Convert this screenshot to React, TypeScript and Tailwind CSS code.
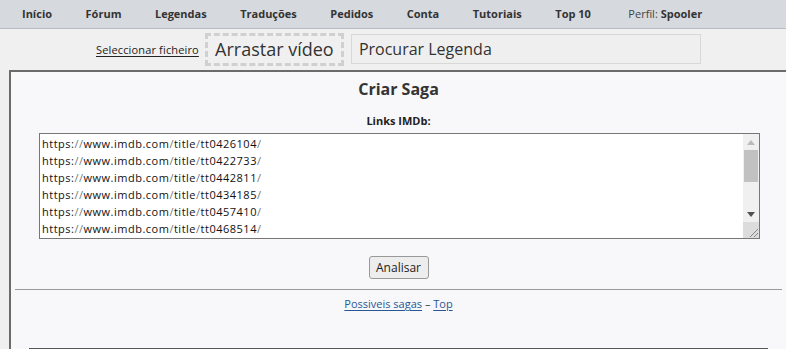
import type { ReactNode } from "react"

const navItems = ["Início", "Fórum", "Legendas", "Traduções", "Pedidos", "Conta", "Tutoriais", "Top 10"]

const links = ["tt0426104", "tt0422733", "tt0442811", "tt0434185", "tt0457410", "tt0468514"]

function Url({ id }: { id: string }) {
  return (
    <div className="h-[17px] leading-[17px] whitespace-nowrap tracking-[0.5px]">
      https:<span className="text-[#777]">/</span>
      <span className="text-[#777]">/</span>www.imdb.com<span className="text-[#777]">/</span>title
      <span className="text-[#777]">/</span>
      {id}
      <span className="text-[#777]">/</span>
    </div>
  )
}

function Scrollbar() {
  return (
    <div className="flex w-[16px] flex-col bg-[#f0f0f0]">
      <div className="flex h-[16px] items-center justify-center">
        <svg width="8" height="5" viewBox="0 0 8 5">
          <path d="M0 5 L4 0 L8 5 Z" fill="#bbb" />
        </svg>
      </div>
      <div className="mx-[1px] h-[32px] bg-[#c1c1c1]" />
      <div className="flex-1" />
      <div className="flex h-[16px] items-center justify-center">
        <svg width="8" height="5" viewBox="0 0 8 5">
          <path d="M0 0 L8 0 L4 5 Z" fill="#505050" />
        </svg>
      </div>
      <div className="relative h-[16px] bg-[#dcdcdc]">
        <svg className="absolute right-0 bottom-0" width="12" height="12" viewBox="0 0 12 12">
          <path d="M11 3 L3 11 M11 7 L7 11" stroke="#888" strokeWidth="1" />
        </svg>
      </div>
    </div>
  )
}

function Link({ children }: { children: ReactNode }) {
  return <a className="text-[#2a5794] underline underline-offset-2">{children}</a>
}

export default function App() {
  return (
    <div
      className="h-[349px] w-full overflow-hidden bg-[#f0f0f0] text-[#222]"
      style={{ fontFamily: '"Open Sans", "DejaVu Sans", sans-serif' }}
    >
      <nav className="flex h-[29px] items-center gap-[33.5px] border-b border-[#b9bcc2] bg-[#d6d9de] pl-[22px] text-[11px] font-bold text-[#333]">
        {navItems.map((n) => (
          <span key={n}>{n}</span>
        ))}
        <span className="ml-[4px] font-normal text-[#444]">
          Perfil: <span className="font-bold text-[#333]">Spooler</span>
        </span>
      </nav>

      <div className="flex h-[41px] items-start pl-[96px] pt-[4px]">
        <a className="mt-[9px] text-[11px] tracking-[0.15px] text-[#222] underline underline-offset-2">
          Seleccionar ficheiro
        </a>
        <div className="ml-[6px] flex h-[33px] w-[139px] items-center justify-center border-[3px] border-dashed border-[#d0d0d0] text-[18px] text-[#333]">
          Arrastar vídeo
        </div>
        <div className="ml-[7px] mt-[1px] flex h-[30px] w-[350px] items-center border border-[#d8d8d8] bg-[#efefef] pl-[7px] text-[16px] text-[#333]">
          Procurar Legenda
        </div>
      </div>

      <main className="ml-[9px] h-[280px] border-t-2 border-l-2 border-[#6b6b6b] bg-[#f8f8fa]">
        <h1 className="pt-[6px] text-center text-[16px] leading-[22px] font-bold text-[#333]">Criar Saga</h1>
        <div className="mt-[13px] text-center text-[11px] leading-[15px] font-bold text-[#222]">Links IMDb:</div>
        <div className="mt-[5px] ml-[28px] flex h-[106px] w-[721px] border border-[#777] bg-white">
          <div className="flex-1 overflow-hidden pt-[1px] pl-[2px] text-[11px] text-[#111]">
            {links.map((l) => (
              <Url key={l} id={l} />
            ))}
          </div>
          <Scrollbar />
        </div>
        <div className="mt-[17px] flex justify-center">
          <button className="h-[23px] w-[60px] rounded-[3px] border border-[#999] bg-[#ededed] text-[12px] text-[#222]">
            Analisar
          </button>
        </div>
        <hr className="mt-[10px] mx-[4px] border-t border-[#9a9a9a]" />
        <div className="mt-[6px] text-center text-[11px] text-[#444]">
          <Link>Possiveis sagas</Link> – <Link>Top</Link>
        </div>
        <div className="mt-[35px] ml-[18px] h-[10px] w-[739px] border-t-2 border-l border-r border-[#555]" />
      </main>
    </div>
  )
}
